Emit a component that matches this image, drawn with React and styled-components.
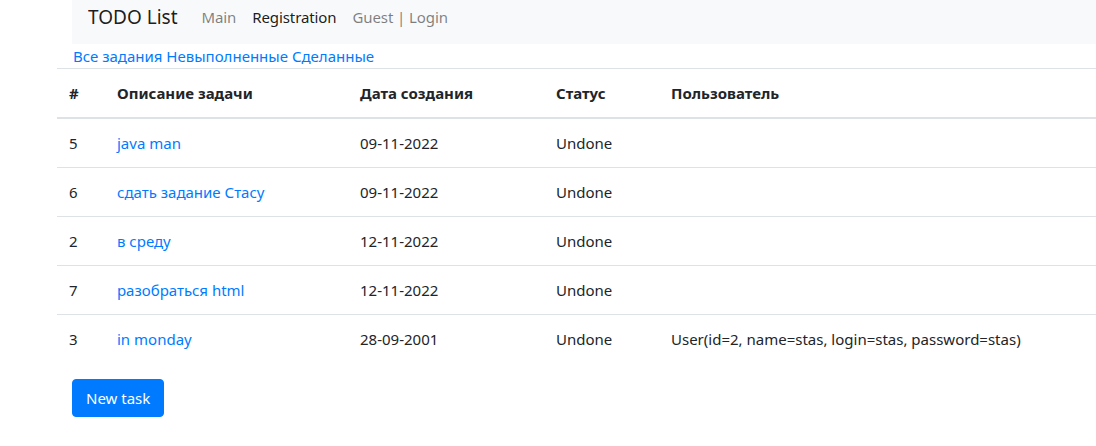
import React from "react";
import styled, { createGlobalStyle } from "styled-components";

const GlobalStyle = createGlobalStyle`
  body {
    margin: 0;
    background: #fff;
    font-family: "Noto Sans", "Open Sans", sans-serif;
    font-size: 15px;
    color: #212529;
  }
`;

const tasks = [
  { id: 5, text: "java man", date: "09-11-2022", status: "Undone", user: "" },
  { id: 6, text: "сдать задание Стасу", date: "09-11-2022", status: "Undone", user: "" },
  { id: 2, text: "в среду", date: "12-11-2022", status: "Undone", user: "" },
  { id: 7, text: "разобраться html", date: "12-11-2022", status: "Undone", user: "" },
  {
    id: 3,
    text: "in monday",
    date: "28-09-2001",
    status: "Undone",
    user: "User(id=2, name=stas, login=stas, password=stas)",
  },
];

function App() {
  return (
    <Page>
      <GlobalStyle />
      <Navbar>
        <Brand>TODO List</Brand>
        <NavLink>Main</NavLink>
        <NavLink active>Registration</NavLink>
        <NavLink>Guest | Login</NavLink>
      </Navbar>
      <Filters>
        <Link>Все задания</Link> <Link>Невыполненные</Link> <Link>Сделанные</Link>
      </Filters>
      <Table>
        <colgroup>
          <col style={{ width: 48 }} />
          <col style={{ width: 243 }} />
          <col style={{ width: 196 }} />
          <col style={{ width: 115 }} />
          <col />
        </colgroup>
        <thead>
          <tr>
            <Th>#</Th>
            <Th>Описание задачи</Th>
            <Th>Дата создания</Th>
            <Th>Статус</Th>
            <Th>Пользователь</Th>
          </tr>
        </thead>
        <tbody>
          {tasks.map((t) => (
            <tr key={t.id}>
              <Td>{t.id}</Td>
              <Td>
                <Link>{t.text}</Link>
              </Td>
              <Td>{t.date}</Td>
              <Td>{t.status}</Td>
              <Td>{t.user}</Td>
            </tr>
          ))}
        </tbody>
      </Table>
      <Button>New task</Button>
    </Page>
  );
}

export default App;

const Page = styled.div`
  display: flex;
  flex-direction: column;
  align-items: flex-start;
  width: 1096px;
  overflow: hidden;
`;

const Navbar = styled.nav`
  display: flex;
  align-items: center;
  box-sizing: border-box;
  height: 44px;
  margin-left: 72px;
  width: calc(100% - 72px);
  padding: 0 16px 10px;
  background: #f8f9fa;
`;

const Brand = styled.span`
  font-size: 19px;
  line-height: 30px;
  margin-right: 16px;
  color: rgba(0, 0, 0, 0.9);
`;

const NavLink = styled.span`
  padding: 0 8px;
  line-height: 24px;
  letter-spacing: -0.1px;
  color: ${(p) => (p.active ? "rgba(0, 0, 0, 0.9)" : "rgba(0, 0, 0, 0.5)")};
`;

const Filters = styled.div`
  margin-left: 73px;
  line-height: 24px;
`;

const Link = styled.a`
  color: #007bff;
  text-decoration: none;
  cursor: pointer;
`;

const Table = styled.table`
  margin-left: 57px;
  width: calc(100% - 40px);
  border-collapse: collapse;
  border-top: 1px solid #dee2e6;
`;

const Th = styled.th`
  text-align: left;
  font-weight: 700;
  padding: 12px;
  line-height: 24px;
  border-bottom: 2px solid #dee2e6;
`;

const Td = styled.td`
  padding: 12px;
  line-height: 24px;
  white-space: nowrap;
  tr + tr > & {
    border-top: 1px solid #dee2e6;
  }
`;

const Button = styled.button`
  margin: 16px 0 0 72px;
  height: 38px;
  padding: 0 13px;
  border: 1px solid #007bff;
  border-radius: 4px;
  background: #007bff;
  color: #fff;
  font-family: inherit;
  font-size: 15px;
  cursor: pointer;
`;
